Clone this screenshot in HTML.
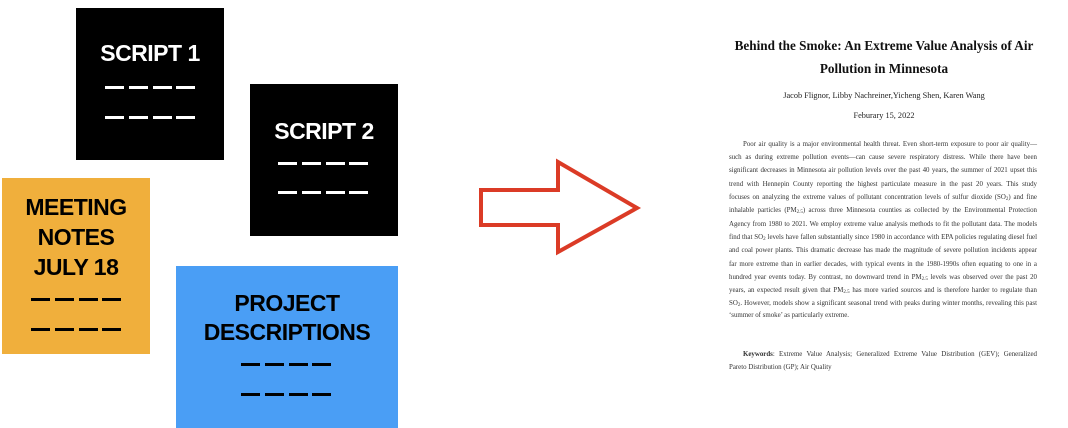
<!DOCTYPE html>
<html><head><meta charset="utf-8"><style>
body{margin:0;width:1068px;height:428px;background:#fff;position:relative;overflow:hidden;font-family:"Liberation Sans",Arial,sans-serif}
.box{position:absolute;text-align:center;font-weight:bold;font-size:23px;letter-spacing:-0.5px}
.t{position:absolute;left:0;right:0;line-height:20px;text-align:center}
.d{position:absolute;height:3px;width:90px}
.d i{position:absolute;top:0;width:19px;height:3px}
.p{position:absolute;font-family:"Liberation Serif",serif;color:#222}
.ln{position:absolute;left:729px;width:308px;font-size:6.9px;line-height:10px;height:10px;text-align:justify;text-align-last:justify;white-space:nowrap;font-family:"Liberation Serif",serif;color:#333}
.ln.nj{text-align-last:left}
sub{font-size:5px;vertical-align:-1px;line-height:0}
</style></head><body>

<div class="box" style="left:76px;top:8px;width:148px;height:152px;background:#000;color:#fff">
<div class="t" style="top:35px">SCRIPT 1</div>
<div class="d" style="left:29px;top:78px"><i style="left:0;background:#fff"></i><i style="left:24px;background:#fff"></i><i style="left:48px;background:#fff"></i><i style="left:71px;background:#fff"></i></div>
<div class="d" style="left:29px;top:108px"><i style="left:0;background:#fff"></i><i style="left:24px;background:#fff"></i><i style="left:48px;background:#fff"></i><i style="left:71px;background:#fff"></i></div>
</div>

<div class="box" style="left:250px;top:84px;width:148px;height:152px;background:#000;color:#fff">
<div class="t" style="top:37px">SCRIPT 2</div>
<div class="d" style="left:28px;top:78px"><i style="left:0;background:#fff"></i><i style="left:24px;background:#fff"></i><i style="left:48px;background:#fff"></i><i style="left:71px;background:#fff"></i></div>
<div class="d" style="left:28px;top:107px"><i style="left:0;background:#fff"></i><i style="left:24px;background:#fff"></i><i style="left:48px;background:#fff"></i><i style="left:71px;background:#fff"></i></div>
</div>

<div class="box" style="left:2px;top:178px;width:148px;height:176px;background:#F0AF3C;color:#000">
<div class="t" style="top:19px">MEETING</div>
<div class="t" style="top:49px">NOTES</div>
<div class="t" style="top:79px">JULY 18</div>
<div class="d" style="left:29px;top:120px"><i style="left:0;background:#000"></i><i style="left:24px;background:#000"></i><i style="left:48px;background:#000"></i><i style="left:71px;background:#000"></i></div>
<div class="d" style="left:29px;top:150px"><i style="left:0;background:#000"></i><i style="left:24px;background:#000"></i><i style="left:48px;background:#000"></i><i style="left:71px;background:#000"></i></div>
</div>

<div class="box" style="left:176px;top:266px;width:222px;height:162px;background:#4A9EF5;color:#000">
<div class="t" style="top:27px">PROJECT</div>
<div class="t" style="top:56px">DESCRIPTIONS</div>
<div class="d" style="left:65px;top:97px"><i style="left:0;background:#000"></i><i style="left:24px;background:#000"></i><i style="left:48px;background:#000"></i><i style="left:71px;background:#000"></i></div>
<div class="d" style="left:65px;top:127px"><i style="left:0;background:#000"></i><i style="left:24px;background:#000"></i><i style="left:48px;background:#000"></i><i style="left:71px;background:#000"></i></div>
</div>

<svg style="position:absolute;left:0;top:0" width="1068" height="428">
<polygon points="481,190 558,190 558,162 637,208 558,252 558,225 481,225" fill="#fff" stroke="#DB3B26" stroke-width="4"/>
</svg>

<div class="p" style="left:700px;width:368px;top:37px;text-align:center;font-weight:bold;font-size:13.2px;line-height:18px;color:#111">Behind the Smoke: An Extreme Value Analysis of Air</div>
<div class="p" style="left:700px;width:368px;top:60px;text-align:center;font-weight:bold;font-size:13.2px;line-height:18px;color:#111">Pollution in Minnesota</div>
<div class="p" style="left:700px;width:368px;top:90px;text-align:center;font-size:8.3px;line-height:12px">Jacob Flignor, Libby Nachreiner,Yicheng Shen, Karen Wang</div>
<div class="p" style="left:700px;width:368px;top:110px;text-align:center;font-size:8.3px;line-height:12px">Feburary 15, 2022</div>

<div class="ln" style="top:140px;left:743px;width:294px">Poor air quality is a major environmental health threat. Even short-term exposure to poor air quality—</div>
<div class="ln" style="top:153px">such as during extreme pollution events—can cause severe respiratory distress. While there have been</div>
<div class="ln" style="top:166px">significant decreases in Minnesota air pollution levels over the past 40 years, the summer of 2021 upset this</div>
<div class="ln" style="top:180px">trend with Hennepin County reporting the highest particulate measure in the past 20 years. This study</div>
<div class="ln" style="top:193px">focuses on analyzing the extreme values of pollutant concentration levels of sulfur dioxide (SO<sub>2</sub>) and fine</div>
<div class="ln" style="top:206px">inhalable particles (PM<sub>2.5</sub>) across three Minnesota counties as collected by the Environmental Protection</div>
<div class="ln" style="top:220px">Agency from 1980 to 2021. We employ extreme value analysis methods to fit the pollutant data. The models</div>
<div class="ln" style="top:233px">find that SO<sub>2</sub> levels have fallen substantially since 1980 in accordance with EPA policies regulating diesel fuel</div>
<div class="ln" style="top:246px">and coal power plants. This dramatic decrease has made the magnitude of severe pollution incidents appear</div>
<div class="ln" style="top:260px">far more extreme than in earlier decades, with typical events in the 1980-1990s often equating to one in a</div>
<div class="ln" style="top:273px">hundred year events today. By contrast, no downward trend in PM<sub>2.5</sub> levels was observed over the past 20</div>
<div class="ln" style="top:286px">years, an expected result given that PM<sub>2.5</sub> has more varied sources and is therefore harder to regulate than</div>
<div class="ln" style="top:299px">SO<sub>2</sub>. However, models show a significant seasonal trend with peaks during winter months, revealing this past</div>
<div class="ln nj" style="top:311px">‘summer of smoke’ as particularly extreme.</div>
<div class="ln" style="top:350px;left:743px;width:294px"><b>Keywords</b>: Extreme Value Analysis; Generalized Extreme Value Distribution (GEV); Generalized</div>
<div class="ln nj" style="top:363px">Pareto Distribution (GP); Air Quality</div>
</body></html>
